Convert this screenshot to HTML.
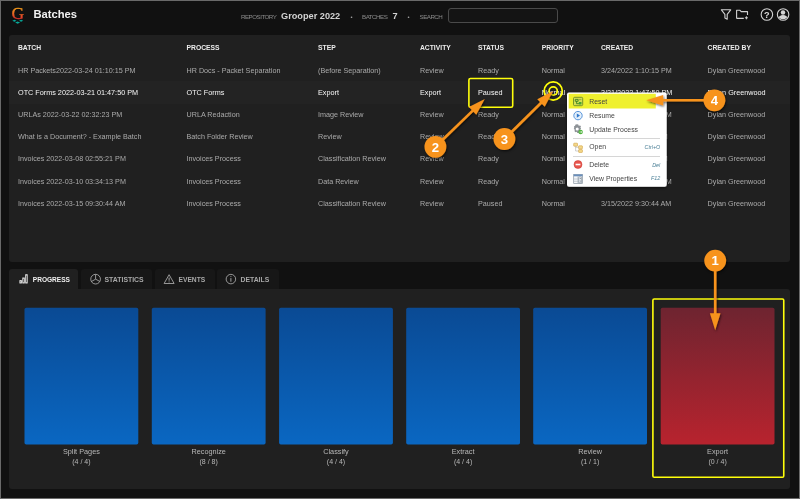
<!DOCTYPE html>
<html lang="en"><head><meta charset="utf-8"><title>Batches</title>
<style>
html,body{margin:0;padding:0;background:#111;}
body{width:800px;height:499px;position:relative;overflow:hidden;font-family:"Liberation Sans",sans-serif;}
.t{position:absolute;white-space:nowrap;}
.abs{position:absolute;}
.panel{position:absolute;background:#202020;border-radius:3px;}
.tab{position:absolute;top:269.4px;height:19.5px;background:#171717;border-radius:3px 3px 0 0;}
#wrap{position:absolute;left:0;top:0;width:800px;height:499px;will-change:transform;}
</style></head><body><div id="wrap">

<div class="abs" style="left:0;top:0;width:798px;height:497px;border:1px solid #6a6a6a;border-width:1px 1px 1px 1px;box-sizing:content-box"></div>
<svg class="abs" style="left:7.7px;top:4.1px" width="20" height="22" viewBox="0 0 20 22">
<defs><linearGradient id="gg" gradientUnits="userSpaceOnUse" x1="0" y1="3.5" x2="0" y2="15.5"><stop offset="0" stop-color="#f5a21a"/><stop offset="1" stop-color="#dc2a2c"/></linearGradient></defs>
<text x="9.8" y="15.1" text-anchor="middle" font-family="Liberation Serif, serif" font-size="17.5" fill="url(#gg)" stroke="url(#gg)" stroke-width="0.3">G</text>
<path d="M4.3 16.7l2.1-1 2.1 1-2.1 1zM11 16.7l2.1-1 2.1 1-2.1 1zM7.1 18.6l2.5-1.15 2.5 1.15-2.5 1.15z" fill="#08a697"/>
</svg>
<div class="t" style="top:6.80px;font-size:11.2px;color:#f2f2f2;line-height:14px;font-weight:bold;left:33.5px;">Batches</div>
<div class="t" style="top:10.70px;font-size:6.2px;color:#8c8c8c;line-height:12px;left:241px;letter-spacing:-0.5px;">REPOSITORY</div>
<div class="t" style="top:9.70px;font-size:9.2px;color:#d2d2d2;line-height:12px;font-weight:bold;left:281px;">Grooper 2022</div>
<div class="t" style="top:10.70px;font-size:6px;color:#a0a0a0;line-height:12px;left:350.6px;">•</div>
<div class="t" style="top:10.70px;font-size:6.2px;color:#8c8c8c;line-height:12px;left:362px;letter-spacing:-0.5px;">BATCHES</div>
<div class="t" style="top:9.70px;font-size:9.2px;color:#d2d2d2;line-height:12px;font-weight:bold;left:392.5px;">7</div>
<div class="t" style="top:10.70px;font-size:6px;color:#a0a0a0;line-height:12px;left:407.6px;">•</div>
<div class="t" style="top:10.70px;font-size:6.2px;color:#8c8c8c;line-height:12px;left:419.5px;letter-spacing:-0.5px;">SEARCH</div>
<div class="abs" style="left:448px;top:8px;width:108px;height:13px;border:1px solid #4a4a4a;border-radius:3px;background:#141414"></div>
<svg class="abs" style="left:718px;top:6px" width="76" height="18" viewBox="0 0 76 18" fill="none" stroke="#d2d2d2" stroke-width="1.1">
<path d="M3.4 3.8h9.3l-3.5 4.5v4.9l-2.3-1.2v-3.7z" stroke-linejoin="round"/>
<path d="M18.6 12.4v-8.1h3.4l1.2 1.3h6.3v3.4M18.6 12.4h7.2" stroke-linejoin="round"/>
<path d="M28.4 10.3v3M26.9 11.8h3" stroke-width="1"/>
<circle cx="48.9" cy="8.45" r="5.75"/>
<circle cx="65.1" cy="8.45" r="5.75"/>
</svg>
<div class="t" style="top:8.70px;font-size:9.2px;color:#d8d8d8;line-height:12px;font-weight:bold;left:666.9px;width:200px;text-align:center;">?</div>
<svg class="abs" style="left:777.1px;top:8.45px" width="12" height="12" viewBox="0 0 12 12"><defs><clipPath id="uc"><circle cx="6" cy="6" r="5.3"/></clipPath></defs>
<g clip-path="url(#uc)" fill="#d4d4d4"><circle cx="6" cy="4.6" r="2.25"/><ellipse cx="6" cy="11.2" rx="4.8" ry="4.2"/></g></svg>
<div class="panel" style="left:8.8px;top:35.3px;width:781.3px;height:226.5px"></div>
<div class="abs" style="left:8.8px;top:81px;width:781.3px;height:22.7px;background:#232323"></div>
<div class="t" style="top:42.10px;font-size:6.75px;color:#ececec;line-height:12px;font-weight:bold;left:18px;">BATCH</div>
<div class="t" style="top:42.10px;font-size:6.75px;color:#ececec;line-height:12px;font-weight:bold;left:186.5px;">PROCESS</div>
<div class="t" style="top:42.10px;font-size:6.75px;color:#ececec;line-height:12px;font-weight:bold;left:318px;">STEP</div>
<div class="t" style="top:42.10px;font-size:6.75px;color:#ececec;line-height:12px;font-weight:bold;left:420px;">ACTIVITY</div>
<div class="t" style="top:42.10px;font-size:6.75px;color:#ececec;line-height:12px;font-weight:bold;left:478px;">STATUS</div>
<div class="t" style="top:42.10px;font-size:6.75px;color:#ececec;line-height:12px;font-weight:bold;left:541.8px;">PRIORITY</div>
<div class="t" style="top:42.10px;font-size:6.75px;color:#ececec;line-height:12px;font-weight:bold;left:601px;">CREATED</div>
<div class="t" style="top:42.10px;font-size:6.75px;color:#ececec;line-height:12px;font-weight:bold;left:707.6px;">CREATED BY</div>
<div class="t" style="top:65.00px;font-size:7.2px;color:#ababab;line-height:12px;left:18px;">HR Packets2022-03-24 01:10:15 PM</div>
<div class="t" style="top:65.00px;font-size:7.2px;color:#ababab;line-height:12px;left:186.5px;">HR Docs - Packet Separation</div>
<div class="t" style="top:65.00px;font-size:7.2px;color:#ababab;line-height:12px;left:318px;">(Before Separation)</div>
<div class="t" style="top:65.00px;font-size:7.2px;color:#ababab;line-height:12px;left:420px;">Review</div>
<div class="t" style="top:65.00px;font-size:7.2px;color:#ababab;line-height:12px;left:478px;">Ready</div>
<div class="t" style="top:65.00px;font-size:7.2px;color:#ababab;line-height:12px;left:541.8px;">Normal</div>
<div class="t" style="top:65.00px;font-size:7.2px;color:#ababab;line-height:12px;left:601px;">3/24/2022 1:10:15 PM</div>
<div class="t" style="top:65.00px;font-size:7.2px;color:#ababab;line-height:12px;left:707.6px;">Dylan Greenwood</div>
<div class="t" style="top:87.10px;font-size:7.25px;color:#f6f6f6;line-height:12px;left:18px;">OTC Forms 2022-03-21 01:47:50 PM</div>
<div class="t" style="top:87.10px;font-size:7.25px;color:#f6f6f6;line-height:12px;left:186.5px;">OTC Forms</div>
<div class="t" style="top:87.10px;font-size:7.25px;color:#f6f6f6;line-height:12px;left:318px;">Export</div>
<div class="t" style="top:87.10px;font-size:7.25px;color:#f6f6f6;line-height:12px;left:420px;">Export</div>
<div class="t" style="top:87.10px;font-size:7.25px;color:#f6f6f6;line-height:12px;left:478px;">Paused</div>
<div class="t" style="top:87.10px;font-size:7.25px;color:#f6f6f6;line-height:12px;left:541.8px;">Normal</div>
<div class="t" style="top:87.10px;font-size:7.25px;color:#f6f6f6;line-height:12px;left:601px;">3/21/2022 1:47:50 PM</div>
<div class="t" style="top:87.10px;font-size:7.25px;color:#f6f6f6;line-height:12px;left:707.6px;">Dylan Greenwood</div>
<div class="t" style="top:109.20px;font-size:7.2px;color:#ababab;line-height:12px;left:18px;">URLAs 2022-03-22 02:32:23 PM</div>
<div class="t" style="top:109.20px;font-size:7.2px;color:#ababab;line-height:12px;left:186.5px;">URLA Redaction</div>
<div class="t" style="top:109.20px;font-size:7.2px;color:#ababab;line-height:12px;left:318px;">Image Review</div>
<div class="t" style="top:109.20px;font-size:7.2px;color:#ababab;line-height:12px;left:420px;">Review</div>
<div class="t" style="top:109.20px;font-size:7.2px;color:#ababab;line-height:12px;left:478px;">Ready</div>
<div class="t" style="top:109.20px;font-size:7.2px;color:#ababab;line-height:12px;left:541.8px;">Normal</div>
<div class="t" style="top:109.20px;font-size:7.2px;color:#ababab;line-height:12px;left:601px;">3/22/2022 2:32:23 PM</div>
<div class="t" style="top:109.20px;font-size:7.2px;color:#ababab;line-height:12px;left:707.6px;">Dylan Greenwood</div>
<div class="t" style="top:131.30px;font-size:7.2px;color:#ababab;line-height:12px;left:18px;">What is a Document? - Example Batch</div>
<div class="t" style="top:131.30px;font-size:7.2px;color:#ababab;line-height:12px;left:186.5px;">Batch Folder Review</div>
<div class="t" style="top:131.30px;font-size:7.2px;color:#ababab;line-height:12px;left:318px;">Review</div>
<div class="t" style="top:131.30px;font-size:7.2px;color:#ababab;line-height:12px;left:420px;">Review</div>
<div class="t" style="top:131.30px;font-size:7.2px;color:#ababab;line-height:12px;left:478px;">Ready</div>
<div class="t" style="top:131.30px;font-size:7.2px;color:#ababab;line-height:12px;left:541.8px;">Normal</div>
<div class="t" style="top:131.30px;font-size:7.2px;color:#ababab;line-height:12px;left:601px;">3/8/2022 4:10:05 PM</div>
<div class="t" style="top:131.30px;font-size:7.2px;color:#ababab;line-height:12px;left:707.6px;">Dylan Greenwood</div>
<div class="t" style="top:153.40px;font-size:7.2px;color:#ababab;line-height:12px;left:18px;">Invoices 2022-03-08 02:55:21 PM</div>
<div class="t" style="top:153.40px;font-size:7.2px;color:#ababab;line-height:12px;left:186.5px;">Invoices Process</div>
<div class="t" style="top:153.40px;font-size:7.2px;color:#ababab;line-height:12px;left:318px;">Classification Review</div>
<div class="t" style="top:153.40px;font-size:7.2px;color:#ababab;line-height:12px;left:420px;">Review</div>
<div class="t" style="top:153.40px;font-size:7.2px;color:#ababab;line-height:12px;left:478px;">Ready</div>
<div class="t" style="top:153.40px;font-size:7.2px;color:#ababab;line-height:12px;left:541.8px;">Normal</div>
<div class="t" style="top:153.40px;font-size:7.2px;color:#ababab;line-height:12px;left:601px;">3/8/2022 2:55:21 PM</div>
<div class="t" style="top:153.40px;font-size:7.2px;color:#ababab;line-height:12px;left:707.6px;">Dylan Greenwood</div>
<div class="t" style="top:175.50px;font-size:7.2px;color:#ababab;line-height:12px;left:18px;">Invoices 2022-03-10 03:34:13 PM</div>
<div class="t" style="top:175.50px;font-size:7.2px;color:#ababab;line-height:12px;left:186.5px;">Invoices Process</div>
<div class="t" style="top:175.50px;font-size:7.2px;color:#ababab;line-height:12px;left:318px;">Data Review</div>
<div class="t" style="top:175.50px;font-size:7.2px;color:#ababab;line-height:12px;left:420px;">Review</div>
<div class="t" style="top:175.50px;font-size:7.2px;color:#ababab;line-height:12px;left:478px;">Ready</div>
<div class="t" style="top:175.50px;font-size:7.2px;color:#ababab;line-height:12px;left:541.8px;">Normal</div>
<div class="t" style="top:175.50px;font-size:7.2px;color:#ababab;line-height:12px;left:601px;">3/10/2022 3:34:13 PM</div>
<div class="t" style="top:175.50px;font-size:7.2px;color:#ababab;line-height:12px;left:707.6px;">Dylan Greenwood</div>
<div class="t" style="top:197.60px;font-size:7.2px;color:#ababab;line-height:12px;left:18px;">Invoices 2022-03-15 09:30:44 AM</div>
<div class="t" style="top:197.60px;font-size:7.2px;color:#ababab;line-height:12px;left:186.5px;">Invoices Process</div>
<div class="t" style="top:197.60px;font-size:7.2px;color:#ababab;line-height:12px;left:318px;">Classification Review</div>
<div class="t" style="top:197.60px;font-size:7.2px;color:#ababab;line-height:12px;left:420px;">Review</div>
<div class="t" style="top:197.60px;font-size:7.2px;color:#ababab;line-height:12px;left:478px;">Paused</div>
<div class="t" style="top:197.60px;font-size:7.2px;color:#ababab;line-height:12px;left:541.8px;">Normal</div>
<div class="t" style="top:197.60px;font-size:7.2px;color:#ababab;line-height:12px;left:601px;">3/15/2022 9:30:44 AM</div>
<div class="t" style="top:197.60px;font-size:7.2px;color:#ababab;line-height:12px;left:707.6px;">Dylan Greenwood</div>
<div class="panel" style="left:8.8px;top:288.9px;width:781.3px;height:199.7px;border-radius:0 3px 3px 3px"></div>
<div class="tab" style="left:8.8px;width:69.6px;height:21px;background:#202020"></div>
<div class="tab" style="left:80.6px;width:71.8px"></div>
<div class="tab" style="left:154.5px;width:60.2px"></div>
<div class="tab" style="left:216.8px;width:62.2px"></div>
<div class="t" style="top:273.60px;font-size:6.57px;color:#f0f0f0;line-height:12px;font-weight:bold;left:32.8px;">PROGRESS</div>
<div class="t" style="top:273.60px;font-size:6.9px;color:#a8a8a8;line-height:12px;font-weight:bold;left:104.5px;">STATISTICS</div>
<div class="t" style="top:273.60px;font-size:6.68px;color:#a8a8a8;line-height:12px;font-weight:bold;left:178.5px;">EVENTS</div>
<div class="t" style="top:273.60px;font-size:6.83px;color:#a8a8a8;line-height:12px;font-weight:bold;left:240.5px;">DETAILS</div>
<svg class="abs" style="left:16px;top:272px" width="240" height="14" viewBox="0 0 240 14" fill="none" stroke="#a4a4a4" stroke-width="0.9">
<g stroke="#f0f0f0"><rect x="3.9" y="8.6" width="1.5" height="2.4"/><rect x="6.8" y="6" width="1.5" height="5"/><rect x="9.7" y="2.7" width="1.5" height="8.3"/></g>
<circle cx="79.6" cy="7.15" r="4.85"/><path d="M79.6 2.3v4.85l4.2 2.3M79.6 7.15l-4.2 2.4"/>
<path d="M153.1 2.7l5 8.8h-10z" stroke-linejoin="round"/><path d="M153.1 5.6v3.1M153.1 9.5v0.9" stroke-width="1"/>
<circle cx="214.9" cy="7.1" r="4.75"/><path d="M214.9 6.1v3.6M214.9 4.2v0.9" stroke-width="1"/>
</svg>
<svg class="abs" style="left:0;top:300px" width="800" height="150" viewBox="0 300 800 150"><defs><linearGradient id="gb" x1="0" y1="0" x2="0" y2="1"><stop offset="0" stop-color="#0a4a94"/><stop offset="1" stop-color="#0a67c2"/></linearGradient><linearGradient id="gr" x1="0" y1="0" x2="0" y2="1"><stop offset="0" stop-color="#6e2430"/><stop offset="1" stop-color="#b8232e"/></linearGradient></defs><rect x="24.5" y="307.7" width="113.8" height="136.8" rx="1.8" fill="url(#gb)"/><rect x="151.8" y="307.7" width="113.8" height="136.8" rx="1.8" fill="url(#gb)"/><rect x="279.1" y="307.7" width="113.8" height="136.8" rx="1.8" fill="url(#gb)"/><rect x="406.2" y="307.7" width="113.8" height="136.8" rx="1.8" fill="url(#gb)"/><rect x="533.2" y="307.7" width="113.8" height="136.8" rx="1.8" fill="url(#gb)"/><rect x="660.7" y="307.7" width="113.8" height="136.8" rx="1.8" fill="url(#gr)"/></svg>
<div class="t" style="top:445.50px;font-size:7.3px;color:#b8b8b8;line-height:12px;left:-18.599999999999994px;width:200px;text-align:center;">Split Pages</div>
<div class="t" style="top:455.90px;font-size:7.0px;color:#b8b8b8;line-height:12px;left:-18.599999999999994px;width:200px;text-align:center;">(4 / 4)</div>
<div class="t" style="top:445.50px;font-size:7.3px;color:#b8b8b8;line-height:12px;left:108.70000000000002px;width:200px;text-align:center;">Recognize</div>
<div class="t" style="top:455.90px;font-size:7.0px;color:#b8b8b8;line-height:12px;left:108.70000000000002px;width:200px;text-align:center;">(8 / 8)</div>
<div class="t" style="top:445.50px;font-size:7.3px;color:#b8b8b8;line-height:12px;left:236.0px;width:200px;text-align:center;">Classify</div>
<div class="t" style="top:455.90px;font-size:7.0px;color:#b8b8b8;line-height:12px;left:236.0px;width:200px;text-align:center;">(4 / 4)</div>
<div class="t" style="top:445.50px;font-size:7.3px;color:#b8b8b8;line-height:12px;left:363.09999999999997px;width:200px;text-align:center;">Extract</div>
<div class="t" style="top:455.90px;font-size:7.0px;color:#b8b8b8;line-height:12px;left:363.09999999999997px;width:200px;text-align:center;">(4 / 4)</div>
<div class="t" style="top:445.50px;font-size:7.3px;color:#b8b8b8;line-height:12px;left:490.1px;width:200px;text-align:center;">Review</div>
<div class="t" style="top:455.90px;font-size:7.0px;color:#b8b8b8;line-height:12px;left:490.1px;width:200px;text-align:center;">(1 / 1)</div>
<div class="t" style="top:445.50px;font-size:7.3px;color:#b8b8b8;line-height:12px;left:617.6px;width:200px;text-align:center;">Export</div>
<div class="t" style="top:455.90px;font-size:7.0px;color:#b8b8b8;line-height:12px;left:617.6px;width:200px;text-align:center;">(0 / 4)</div>
<svg class="abs" style="left:555px;top:82px" width="125" height="120" viewBox="555 82 125 120"><defs><filter id="ms" x="-20%" y="-20%" width="140%" height="140%"><feDropShadow dx="0" dy="1" stdDeviation="1.8" flood-color="#000" flood-opacity="0.6"/></filter></defs><rect x="567" y="92.6" width="99.7" height="94.1" rx="2" fill="#fff" filter="url(#ms)"/><rect x="568.7" y="93.8" width="87.1" height="14.7" fill="#eff02e"/></svg>
<div class="t" style="top:95.60px;font-size:6.85px;color:#444;line-height:12px;left:589.3px;">Reset</div>
<div class="t" style="top:109.60px;font-size:6.85px;color:#444;line-height:12px;left:589.3px;">Resume</div>
<div class="t" style="top:123.80px;font-size:6.85px;color:#444;line-height:12px;left:589.3px;">Update Process</div>
<div class="t" style="top:141.10px;font-size:6.85px;color:#444;line-height:12px;left:589.3px;">Open</div>
<div class="t" style="top:140.90px;font-size:5.4px;color:#4a7f96;line-height:12px;right:139.70000000000005px;font-style:italic;">Ctrl+O</div>
<div class="t" style="top:158.80px;font-size:6.85px;color:#444;line-height:12px;left:589.3px;">Delete</div>
<div class="t" style="top:158.60px;font-size:5.4px;color:#4a7f96;line-height:12px;right:139.70000000000005px;font-style:italic;">Del</div>
<div class="t" style="top:172.60px;font-size:6.85px;color:#444;line-height:12px;left:589.3px;">View Properties</div>
<div class="t" style="top:172.40px;font-size:5.4px;color:#4a7f96;line-height:12px;right:139.70000000000005px;font-style:italic;">F12</div>
<div class="abs" style="left:573px;top:138.3px;width:87px;height:1px;background:#d6d6d6"></div>
<div class="abs" style="left:573px;top:155.5px;width:87px;height:1px;background:#d6d6d6"></div>
<svg class="abs" style="left:572px;top:95px" width="13" height="91" viewBox="0 0 13 91">
<rect x="1.5" y="2.3" width="9.2" height="8.4" rx="1.2" fill="#d3df52" stroke="#5d7f22" stroke-width="0.8"/><path d="M3.3 4.4h2.8v1.9h-2.8zM4.6 6.3v2.4h2.6" fill="none" stroke="#2f7a1c" stroke-width="0.8"/><rect x="6.9" y="7" width="2.6" height="2.5" fill="#46a52e"/><path d="M6.8 4.6h2.6" stroke="#7f9a3a" stroke-width="0.7"/>
<circle cx="6" cy="20.6" r="4.2" fill="#e3effb" stroke="#4b8bd6" stroke-width="0.9"/><path d="M4.8 18.4l3.2 2.2-3.2 2.2z" fill="#2f78cc"/>
<g transform="translate(5.2 34) scale(1.18) translate(-5.2 -34)"><path d="M5.2 30l.9.2.4 1.1 1.2-.3.7.8-.5 1 .6.9-.8.9.3 1.1-1.1.5-.3 1.1h-1.3l-.6-.9-1.1.3-.7-.9.3-1.1-.9-.7.4-1.1-.3-1.1 1-.6.4-1.1z" fill="#8d9297"/><circle cx="5.2" cy="34" r="1.3" fill="#fff"/></g><circle cx="8.6" cy="37" r="2.2" fill="#4db33a"/><path d="M7.5 37h2.1M9 36.1l.9.9-.9.9" stroke="#fff" stroke-width="0.6" fill="none"/>
<rect x="1.7" y="48.2" width="3.8" height="3" rx="0.5" fill="#f5d98a" stroke="#d0a040" stroke-width="0.6"/><rect x="6.6" y="50.8" width="3.8" height="3" rx="0.5" fill="#f5d98a" stroke="#d0a040" stroke-width="0.6"/><rect x="6.6" y="54.6" width="3.8" height="2.8" rx="0.5" fill="#f5d98a" stroke="#d0a040" stroke-width="0.6"/><path d="M3.6 51.2v4.8h3M3.6 52.3h3" stroke="#a8a8a8" stroke-width="0.55" fill="none"/>
<circle cx="6" cy="69.5" r="4" fill="#e8554d"/><circle cx="6" cy="69.5" r="4" fill="none" stroke="#c9352f" stroke-width="0.5"/><rect x="3.6" y="68.7" width="4.8" height="1.6" fill="#fff"/>
<rect x="1.7" y="79.4" width="8.8" height="9" fill="#f4f6f8" stroke="#8a96a2" stroke-width="0.7"/><rect x="1.7" y="79.4" width="8.8" height="1.9" fill="#6a8fbc"/><path d="M1.7 84h8.8M1.7 86.3h8.8M5.8 81.3v7" stroke="#a4aeb8" stroke-width="0.55"/><rect x="6.8" y="81.9" width="2.9" height="6" fill="#e3e9f0" stroke="#76828e" stroke-width="0.5"/><path d="M7.5 84l.75-.9.75.9zM7.5 85.8l.75.9.75-.9z" fill="#5a6672"/>
</svg>
<svg class="abs" style="left:0;top:0" width="800" height="499" viewBox="0 0 800 499">
<defs><filter id="ds" x="-30%" y="-30%" width="160%" height="160%"><feDropShadow dx="0.8" dy="1.2" stdDeviation="1.2" flood-color="#000" flood-opacity="0.65"/></filter></defs>
<g fill="none" stroke="#ffff0a" stroke-width="1.6">
<rect x="468.9" y="78.5" width="43.8" height="28.8" rx="1.6"/>
<rect x="652.9" y="299.05" width="130.85" height="178.2" rx="1.3"/>
<circle cx="553.2" cy="91" r="9.1" stroke-width="1.7"/><circle cx="553.2" cy="91" r="4.1" stroke-width="1.7"/>
</g>
<g filter="url(#ds)" fill="#f7931e" stroke="none">
<g><path d="M435.40 146.80L473.30 110.13" stroke="#f7931e" stroke-width="2.6" fill="none"/><path d="M484.80 99.00L476.27 114.63L468.90 107.01z"/><circle cx="435.4" cy="146.8" r="10.9"/></g>
<g><path d="M504.40 139.00L541.70 102.23" stroke="#f7931e" stroke-width="2.6" fill="none"/><path d="M553.10 91.00L544.71 106.71L537.27 99.16z"/><circle cx="504.4" cy="139.0" r="10.9"/></g>
<g><path d="M714.40 100.30L662.20 100.30" stroke="#f7931e" stroke-width="2.6" fill="none"/><path d="M646.20 100.30L663.20 95.00L663.20 105.60z"/><circle cx="714.4" cy="100.3" r="10.9"/></g>
<g><path d="M715.20 260.60L715.20 314.30" stroke="#f7931e" stroke-width="2.6" fill="none"/><path d="M715.20 330.30L709.90 313.30L720.50 313.30z"/><circle cx="715.2" cy="260.6" r="10.9"/></g>
</g>
<g font-family="Liberation Sans, sans-serif" font-weight="bold" font-size="13.2" fill="#fff" text-anchor="middle">
<text x="435.4" y="151.5">2</text>
<text x="504.4" y="143.7">3</text>
<text x="714.4" y="105.0">4</text>
<text x="715.2" y="265.3">1</text>
</g></svg>
</div></body></html>
